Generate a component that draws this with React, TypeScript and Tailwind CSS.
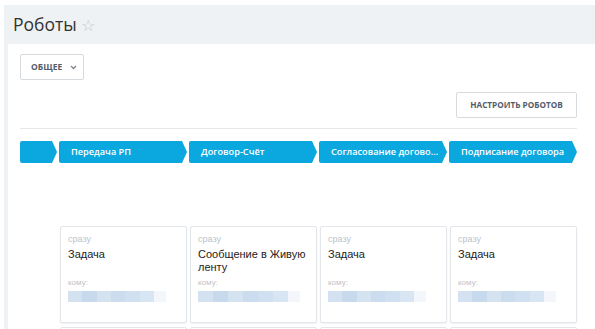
import React from 'react';

const stages = ['Передача РП', 'Договор-Счёт', 'Согласование догово...', 'Подписание договора'];

const cards = [
  { when: 'сразу', title: 'Задача', bar: 86 },
  { when: 'сразу', title: 'Сообщение в Живую ленту', bar: 90 },
  { when: 'сразу', title: 'Задача', bar: 86 },
  { when: 'сразу', title: 'Задача', bar: 86 },
];

const arrow = 'polygon(0 0, calc(100% - 5px) 0, 100% 50%, calc(100% - 5px) 100%, 0 100%)';

const Stage: React.FC<{ label?: string; width: string }> = ({ label, width }) => (
  <div
    className={`${width} h-[22px] shrink-0 bg-[#0aa8df] rounded-l-[2px] flex items-center pl-3 pr-2 text-white text-[9.2px] font-semibold whitespace-nowrap overflow-hidden`}
    style={{ clipPath: arrow }}
  >
    {label}
  </div>
);

const BlurBar: React.FC<{ width: number }> = ({ width }) => (
  <div className="flex h-[11px] mt-[3px]">
    <div className="flex" style={{ width }}>
      <div className="flex-1 bg-[#d3e1f0]" />
      <div className="flex-1 bg-[#c7d9ec]" />
      <div className="flex-1 bg-[#d5e3f1]" />
      <div className="flex-1 bg-[#cbdcee]" />
      <div className="flex-1 bg-[#d1e0f0]" />
      <div className="flex-1 bg-[#d8e5f2]" />
    </div>
    <div className="w-[12px] bg-[#f3f7fb]" />
  </div>
);

const Card: React.FC<{ when?: string; title?: string; bar?: number }> = ({ when, title, bar }) => (
  <div className="w-[127px] h-[97px] shrink-0 bg-white border border-[#e3e6ea] rounded-[2px] shadow-[0_1px_2px_rgba(0,0,0,0.06)] px-[7px] pt-[7px] font-['Liberation_Sans',Arial,sans-serif]">
    {title && (
      <>
        <div className="text-[9px] leading-[11px] text-[#bcc3ca]">{when}</div>
        <div className="mt-[3px] min-h-[30px] text-[11px] leading-[13px] text-[#222]">{title}</div>
        <div className="text-[8px] leading-[10px] text-[#bcc3ca]">кому:</div>
        <BlurBar width={bar ?? 86} />
      </>
    )}
  </div>
);

export default function App() {
  return (
    <div className="w-[595px] h-[329px] overflow-hidden bg-white pl-1 pt-[5px] font-['Open_Sans',sans-serif]">
      <div className="bg-[#eef2f4] h-[400px] w-[600px]">
        <div className="h-[39px] flex items-center pl-[9px] gap-[4px]">
          <span className="text-[17.5px] text-[#333] leading-none">Роботы</span>
          <span className="text-[16px] text-[#c2c8ce] leading-none">☆</span>
        </div>
        <div className="ml-1 bg-white h-full pl-3 pt-[10px]">
          <div className="w-[557px]">
            <button className="w-[64px] h-[26px] border border-[#d5dade] rounded-[2px] flex items-center pl-[10px] gap-[8px] text-[8.5px] font-bold text-[#535c69]">
              ОБЩЕЕ
              <svg width="7" height="5" viewBox="0 0 7 5" fill="none">
                <path d="M1 1l2.5 2.5L6 1" stroke="#7b8591" strokeWidth="1.3" />
              </svg>
            </button>
            <div className="flex justify-end mt-3">
              <button className="w-[121px] h-[26px] border border-[#d5dade] rounded-[2px] text-[8.2px] font-bold text-[#535c69]">
                НАСТРОИТЬ РОБОТОВ
              </button>
            </div>
            <div className="h-px bg-[#e6e9ec] mt-[10px]" />
            <div className="flex gap-[2px] mt-3">
              <Stage width="w-[37px]" />
              {stages.map((s) => (
                <Stage key={s} label={s} width="w-[128px]" />
              ))}
            </div>
            <div className="flex gap-[3px] mt-[63px] pl-[40px]">
              {cards.map((c, i) => (
                <Card key={i} {...c} />
              ))}
            </div>
            <div className="flex gap-[3px] mt-[4px] pl-[40px]">
              {cards.map((_, i) => (
                <Card key={i} />
              ))}
            </div>
          </div>
        </div>
      </div>
    </div>
  );
}
